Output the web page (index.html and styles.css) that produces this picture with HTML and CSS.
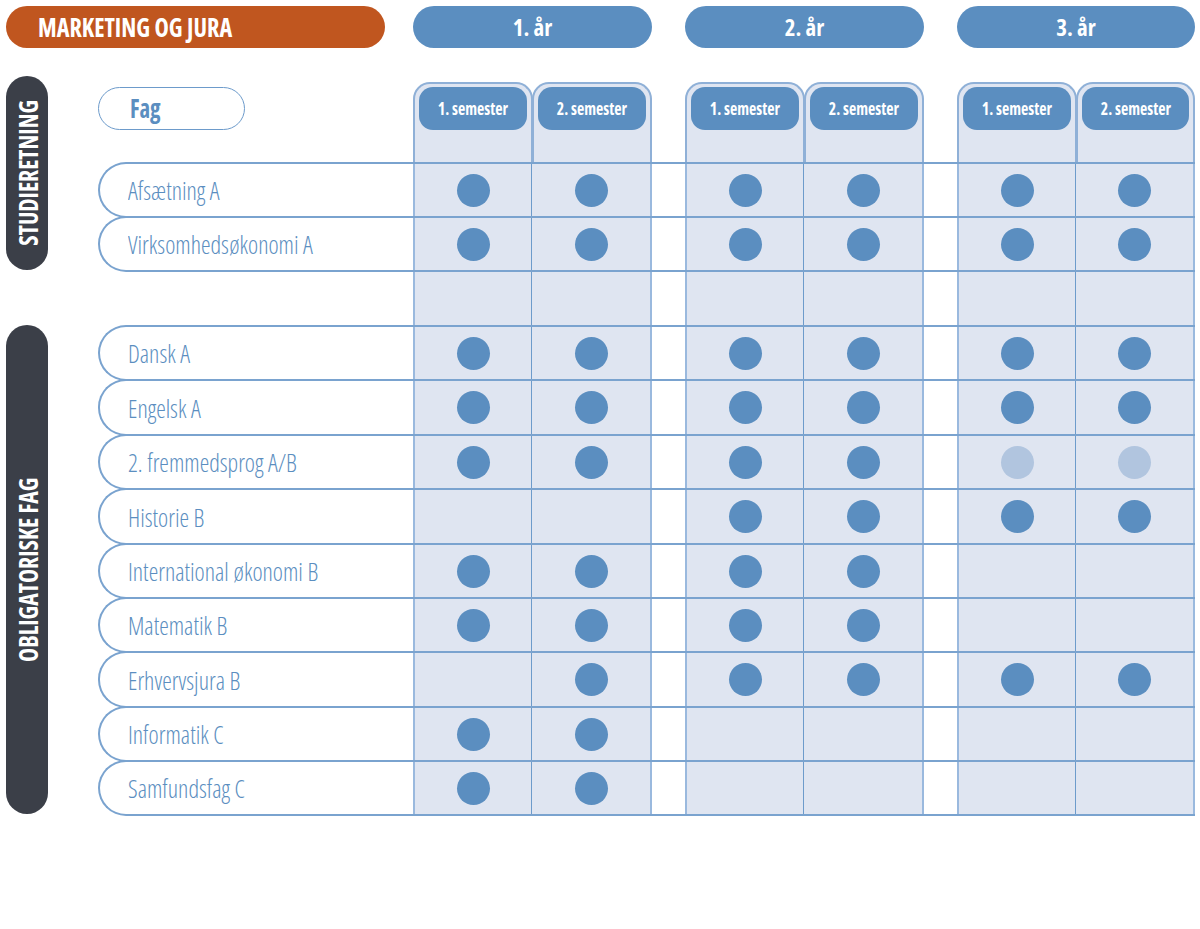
FILE: index.html
```html
<!DOCTYPE html>
<html lang="da">
<head>
<meta charset="utf-8">
<title>Marketing og jura</title>
<link rel="stylesheet" href="styles.css">
</head>
<body>
<div class="page">
  <header class="top">
    <div class="title"><span class="txt">MARKETING OG JURA</span></div>
    <div class="years">
      <div class="year"><span class="txt">1. år</span></div>
      <div class="year"><span class="txt">2. år</span></div>
      <div class="year year-last"><span class="txt">3. år</span></div>
    </div>
  </header>

  <main class="board">
    <div class="label label-studie"><span>STUDIERETNING</span></div>
    <div class="label label-obl"><span>OBLIGATORISKE FAG</span></div>

    <div class="head">
      <div class="fag-cell"><div class="fag"><span class="txt">Fag</span></div></div>
      <div class="semhead first"><div class="sem"><span class="txt">1. semester</span></div></div>
      <div class="semhead second"><div class="sem"><span class="txt">2. semester</span></div></div>
      <div class="gap"></div>
      <div class="semhead first"><div class="sem"><span class="txt">1. semester</span></div></div>
      <div class="semhead second"><div class="sem"><span class="txt">2. semester</span></div></div>
      <div class="gap"></div>
      <div class="semhead first"><div class="sem"><span class="txt">1. semester</span></div></div>
      <div class="semhead second"><div class="sem"><span class="txt">2. semester</span></div></div>
    </div>

    <div class="row">
      <div class="subject"><span class="txt">Afsætning A</span></div>
      <div class="cell first"><span class="dot"></span></div>
      <div class="cell second"><span class="dot"></span></div>
      <div class="gap"></div>
      <div class="cell first"><span class="dot"></span></div>
      <div class="cell second"><span class="dot"></span></div>
      <div class="gap"></div>
      <div class="cell first"><span class="dot"></span></div>
      <div class="cell second"><span class="dot"></span></div>
    </div>

    <div class="row">
      <div class="subject"><span class="txt">Virksomhedsøkonomi A</span></div>
      <div class="cell first"><span class="dot"></span></div>
      <div class="cell second"><span class="dot"></span></div>
      <div class="gap"></div>
      <div class="cell first"><span class="dot"></span></div>
      <div class="cell second"><span class="dot"></span></div>
      <div class="gap"></div>
      <div class="cell first"><span class="dot"></span></div>
      <div class="cell second"><span class="dot"></span></div>
    </div>

    <div class="spacer">
      <div class="blank"></div>
      <div class="cell first"></div>
      <div class="cell second"></div>
      <div class="gap"></div>
      <div class="cell first"></div>
      <div class="cell second"></div>
      <div class="gap"></div>
      <div class="cell first"></div>
      <div class="cell second"></div>
    </div>

    <div class="row">
      <div class="subject"><span class="txt">Dansk A</span></div>
      <div class="cell first"><span class="dot"></span></div>
      <div class="cell second"><span class="dot"></span></div>
      <div class="gap"></div>
      <div class="cell first"><span class="dot"></span></div>
      <div class="cell second"><span class="dot"></span></div>
      <div class="gap"></div>
      <div class="cell first"><span class="dot"></span></div>
      <div class="cell second"><span class="dot"></span></div>
    </div>

    <div class="row">
      <div class="subject"><span class="txt">Engelsk A</span></div>
      <div class="cell first"><span class="dot"></span></div>
      <div class="cell second"><span class="dot"></span></div>
      <div class="gap"></div>
      <div class="cell first"><span class="dot"></span></div>
      <div class="cell second"><span class="dot"></span></div>
      <div class="gap"></div>
      <div class="cell first"><span class="dot"></span></div>
      <div class="cell second"><span class="dot"></span></div>
    </div>

    <div class="row">
      <div class="subject"><span class="txt">2. fremmedsprog A/B</span></div>
      <div class="cell first"><span class="dot"></span></div>
      <div class="cell second"><span class="dot"></span></div>
      <div class="gap"></div>
      <div class="cell first"><span class="dot"></span></div>
      <div class="cell second"><span class="dot"></span></div>
      <div class="gap"></div>
      <div class="cell first"><span class="dot dot-light"></span></div>
      <div class="cell second"><span class="dot dot-light"></span></div>
    </div>

    <div class="row">
      <div class="subject"><span class="txt">Historie B</span></div>
      <div class="cell first"></div>
      <div class="cell second"></div>
      <div class="gap"></div>
      <div class="cell first"><span class="dot"></span></div>
      <div class="cell second"><span class="dot"></span></div>
      <div class="gap"></div>
      <div class="cell first"><span class="dot"></span></div>
      <div class="cell second"><span class="dot"></span></div>
    </div>

    <div class="row">
      <div class="subject"><span class="txt">International økonomi B</span></div>
      <div class="cell first"><span class="dot"></span></div>
      <div class="cell second"><span class="dot"></span></div>
      <div class="gap"></div>
      <div class="cell first"><span class="dot"></span></div>
      <div class="cell second"><span class="dot"></span></div>
      <div class="gap"></div>
      <div class="cell first"></div>
      <div class="cell second"></div>
    </div>

    <div class="row">
      <div class="subject"><span class="txt">Matematik B</span></div>
      <div class="cell first"><span class="dot"></span></div>
      <div class="cell second"><span class="dot"></span></div>
      <div class="gap"></div>
      <div class="cell first"><span class="dot"></span></div>
      <div class="cell second"><span class="dot"></span></div>
      <div class="gap"></div>
      <div class="cell first"></div>
      <div class="cell second"></div>
    </div>

    <div class="row">
      <div class="subject"><span class="txt">Erhvervsjura B</span></div>
      <div class="cell first"></div>
      <div class="cell second"><span class="dot"></span></div>
      <div class="gap"></div>
      <div class="cell first"><span class="dot"></span></div>
      <div class="cell second"><span class="dot"></span></div>
      <div class="gap"></div>
      <div class="cell first"><span class="dot"></span></div>
      <div class="cell second"><span class="dot"></span></div>
    </div>

    <div class="row">
      <div class="subject"><span class="txt">Informatik C</span></div>
      <div class="cell first"><span class="dot"></span></div>
      <div class="cell second"><span class="dot"></span></div>
      <div class="gap"></div>
      <div class="cell first"></div>
      <div class="cell second"></div>
      <div class="gap"></div>
      <div class="cell first"></div>
      <div class="cell second"></div>
    </div>

    <div class="row">
      <div class="subject"><span class="txt">Samfundsfag C</span></div>
      <div class="cell first"><span class="dot"></span></div>
      <div class="cell second"><span class="dot"></span></div>
      <div class="gap"></div>
      <div class="cell first"></div>
      <div class="cell second"></div>
      <div class="gap"></div>
      <div class="cell first"></div>
      <div class="cell second"></div>
    </div>
  </main>
</div>
</body>
</html>
```

FILE: styles.css
```css
* { box-sizing: border-box; }

html, body {
  margin: 0;
  padding: 0;
  background: #ffffff;
}

body {
  font-family: "Open Sans", "DejaVu Sans Condensed", sans-serif;
  font-stretch: 75%;
  color: #5b8ec0;
}

.page {
  width: 1200px;
  padding-bottom: 20px;
}

.txt {
  display: inline-block;
  white-space: nowrap;
}

/* ---------- top bar ---------- */
.top {
  display: flex;
  padding: 6px 0 0 6px;
  height: 48px;
}

.title {
  width: 379px;
  height: 42px;
  border-radius: 21px;
  background: #c0561f;
  color: #ffffff;
  font-weight: 700;
  font-size: 26px;
  line-height: 42px;
  padding-left: 32px;
}

.title .txt {
  transform: scaleX(0.93);
  transform-origin: left center;
}

.years {
  display: flex;
  gap: 33px;
  margin-left: 28px;
}

.year {
  width: 239px;
  height: 42px;
  border-radius: 21px;
  background: #5b8ec0;
  color: #ffffff;
  font-weight: 700;
  font-size: 23px;
  line-height: 42px;
  text-align: center;
}

.year-last { width: 238px; }

/* ---------- board ---------- */
.board {
  display: grid;
  grid-template-columns: 42px 50px 1097px;
  grid-template-rows: 80px 54px 54px 55px 54px 55px 54px 55px 54px 54px 55px 54px 54px;
  margin: 34px 0 0 6px;
}

.label {
  grid-column: 1;
  background: #3b3f48;
  border-radius: 21px;
  display: flex;
  align-items: center;
  justify-content: center;
}

.label span {
  display: inline-block;
  writing-mode: vertical-rl;
  transform: rotate(180deg) scaleY(0.88);
  color: #ffffff;
  font-weight: 700;
  font-size: 27px;
  line-height: 1;
  white-space: nowrap;
}

.label-studie {
  grid-row: 1 / 4;
  margin-top: -6px;
}

.label-obl {
  grid-row: 5 / 14;
}

.head, .row, .spacer {
  grid-column: 3;
  display: grid;
  grid-template-columns: 315px 119px 120px 33px 119px 120px 33px 119px 119px;
}

.row {
  grid-template-columns: 313px 119px 120px 33px 119px 120px 33px 119px 119px;
  align-self: stretch;
  margin-bottom: -2px;
  border: 2px solid #7aa3cf;
  border-right: none;
  border-radius: 28px 0 0 28px;
}

.spacer {
  padding-top: 2px;
}

/* header */
.fag-cell {
  padding-top: 5px;
}

.fag {
  width: 147px;
  height: 43px;
  border: 1px solid #6d9bcb;
  border-radius: 22px;
  font-weight: 700;
  font-size: 26px;
  line-height: 40px;
  padding-left: 31px;
  color: #5b8ec0;
}

.fag .txt {
  transform: scaleX(0.88);
  transform-origin: left center;
}

.semhead {
  background: #dfe5f1;
  border: 2px solid #8fb0d7;
  border-bottom: none;
  border-radius: 17px 17px 0 0;
  padding: 3px 4px 0 4px;
}

.semhead.first {
  margin-right: -1px;
  position: relative;
  z-index: 1;
}

.sem {
  height: 43px;
  border-radius: 14px;
  background: #5b8ec0;
  color: #ffffff;
  font-weight: 700;
  font-size: 18px;
  line-height: 43px;
  text-align: center;
}

.sem .txt {
  transform: scaleX(0.88);
}

/* rows */
.subject {
  display: flex;
  align-items: center;
  padding-left: 28px;
  font-weight: 300;
  font-size: 26px;
  color: #5b8ec0;
}

.subject .txt {
  transform: scaleX(0.93);
  transform-origin: left center;
}

.cell {
  background: #dfe5f1;
  display: flex;
  align-items: center;
  justify-content: center;
}

.cell.first {
  border-left: 2px solid #9ab9de;
  border-right: 1px solid #6d9bcb;
}

.cell.second {
  border-right: 2px solid #9ab9de;
}

.dot {
  width: 33px;
  height: 33px;
  border-radius: 50%;
  background: #5b8ec0;
}

.dot-light {
  background: #b1c5df;
}
```
